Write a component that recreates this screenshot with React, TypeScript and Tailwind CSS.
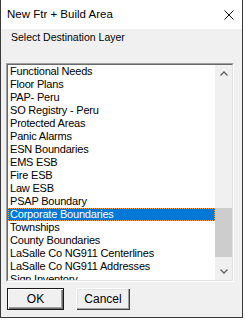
const layers = [
  "Functional Needs",
  "Floor Plans",
  "PAP- Peru",
  "SO Registry - Peru",
  "Protected Areas",
  "Panic Alarms",
  "ESN Boundaries",
  "EMS ESB",
  "Fire ESB",
  "Law ESB",
  "PSAP Boundary",
  "Corporate Boundaries",
  "Townships",
  "County Boundaries",
  "LaSalle Co NG911 Centerlines",
  "LaSalle Co NG911 Addresses",
  "Sign Inventory",
];

function Chevron({ down }: { down?: boolean }) {
  return (
    <svg width="8" height="5" viewBox="0 0 8 5" className={down ? "rotate-180" : ""}>
      <polyline points="0.5,4.5 4,1 7.5,4.5" fill="none" stroke="#606060" strokeWidth="1.3" />
    </svg>
  );
}

export default function App() {
  const selected = "Corporate Boundaries";

  return (
    <div className="w-[245px] h-[320px] bg-white font-['Liberation_Sans',Arial,sans-serif] text-black">
      <div className="w-[243px] h-[318px] flex flex-col border-l border-r border-b border-[#3a3a3a]">
        {/* title bar */}
        <div className="h-[29px] bg-white flex items-center justify-between pl-[6px] pr-[8px] shrink-0">
          <span className="text-[11.5px] leading-none">New Ftr + Build Area</span>
          <svg width="10" height="10" viewBox="0 0 10 10">
            <path d="M0.5 0.5 L9.5 9.5 M9.5 0.5 L0.5 9.5" stroke="#111" strokeWidth="1" />
          </svg>
        </div>

        {/* body */}
        <div className="flex-1 bg-[#f0f0f0] pl-[5px] flex flex-col">
          <div className="mt-[2px] ml-[5px] h-[12px] text-[10.5px] leading-[12px]">Select Destination Layer</div>

          {/* list box */}
          <div className="mt-[20px] w-[228px] h-[219px] border border-t-[#a0a0a0] border-l-[#a0a0a0] border-r-white border-b-white">
            <div className="w-full h-full flex border border-t-[#696969] border-l-[#696969] border-r-[#e3e3e3] border-b-[#e3e3e3] bg-white">
              <div className="w-[207px] h-full overflow-hidden">
                {layers.map((name) => (
                  <div
                    key={name}
                    className={`h-[13px] pl-[2px] text-[11px] leading-[13px] tracking-[-0.2px] whitespace-nowrap ${
                      name === selected
                        ? "bg-[#0078d7] text-white outline-1 outline-dotted outline-[#f7a33a] -outline-offset-1"
                        : ""
                    }`}
                  >
                    {name}
                  </div>
                ))}
              </div>
              {/* scrollbar */}
              <div className="w-[17px] h-full bg-[#f0f0f0] flex flex-col">
                <div className="h-[17px] flex items-center justify-center">
                  <Chevron />
                </div>
                <div className="flex-1">
                  <div className="mt-[126px] h-[49px] bg-[#cdcdcd]" />
                </div>
                <div className="h-[17px] flex items-center justify-center">
                  <Chevron down />
                </div>
              </div>
            </div>
          </div>

          {/* buttons */}
          <div className="mt-[6px] ml-[1px] flex gap-[12px]">
            <button className="w-[57px] h-[22px] border border-[#1a1a1a] bg-[#f0f0f0] shadow-[inset_1px_1px_#fff,inset_-1px_-1px_#696969,inset_-2px_-2px_#a0a0a0] text-[12px]">
              OK
            </button>
            <button className="w-[54px] h-[22px] bg-[#f0f0f0] shadow-[inset_1px_1px_#fff,inset_-1px_-1px_#404040,inset_-2px_-2px_#a0a0a0,inset_2px_2px_#e3e3e3] text-[12px]">
              Cancel
            </button>
          </div>
        </div>
      </div>
    </div>
  );
}
